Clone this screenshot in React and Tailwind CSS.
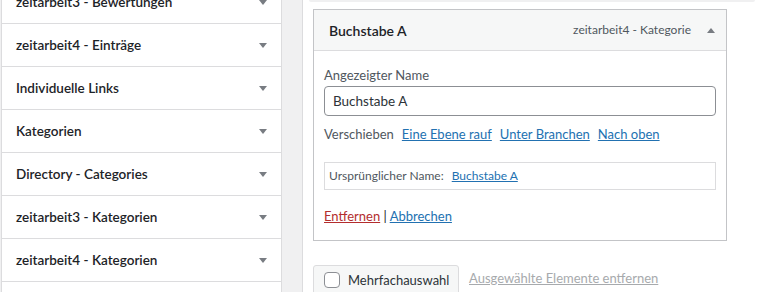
import { useState } from "react";

const menus = [
  "zeitarbeit3 - Bewertungen",
  "zeitarbeit4 - Einträge",
  "Individuelle Links",
  "Kategorien",
  "Directory - Categories",
  "zeitarbeit3 - Kategorien",
  "zeitarbeit4 - Kategorien",
  "Schlagwörter",
];

function Caret({ up }) {
  return (
    <svg width="8" height="5" viewBox="0 0 8 5" className="fill-[#787c82]">
      {up ? <path d="M4 0 L8 5 L0 5 Z" /> : <path d="M0 0 L8 0 L4 5 Z" />}
    </svg>
  );
}

export default function App() {
  const [name, setName] = useState("Buchstabe A");

  return (
    <div className="h-[292px] w-[771px] overflow-hidden bg-[#f0f0f1] font-['Lato',sans-serif] text-[#1d2327] flex">
      {/* left accordion */}
      <div className="ml-px w-[281px] shrink-0 overflow-hidden">
        <div className="-mt-[19px] bg-white border-x border-[#dcdcde]">
          {menus.map((m) => (
            <div key={m} className="h-[43px] flex items-center justify-between pl-[14px] pr-[14px] border-b border-[#dcdcde]">
              <span className="text-[13.5px] font-semibold">{m}</span>
              <Caret />
            </div>
          ))}
        </div>
      </div>

      {/* right column */}
      <div className="ml-[20px] flex-1 bg-white border-l border-[#dcdcde] pl-[10px] relative">
        <div className="absolute left-[6px] right-[16px] top-0 h-[2px] rounded-b-md bg-[#f0f0f1]" />
        <div className="mt-[9px] w-[414px] border border-[#c3c4c7]">
          <div className="h-[41px] bg-[#f6f7f7] border-b border-[#dcdcde] flex items-center pl-[15px] pr-[11px]">
            <span className="text-[14px] font-semibold flex-1">Buchstabe A</span>
            <span className="text-[12px] text-[#50575e] mr-[16px]">zeitarbeit4 - Kategorie</span>
            <Caret up />
          </div>
          <div className="px-[10px] pt-[14px] pb-[14px]">
            <label className="block text-[13px] text-[#50575e] leading-[20px]">Angezeigter Name</label>
            <input
              value={name}
              onChange={(e) => setName(e.target.value)}
              className="mt-px w-[392px] h-[30px] rounded-[4px] border border-[#8c8f94] px-[8px] text-[13.5px] text-[#2c3338] outline-none"
            />
            <div className="mt-[8px] text-[13px] text-[#50575e] flex gap-[8px] leading-[20px]">
              <span>Verschieben</span>
              <a className="text-[#2271b1] underline" href="#">Eine Ebene rauf</a>
              <a className="text-[#2271b1] underline" href="#">Unter Branchen</a>
              <a className="text-[#2271b1] underline" href="#">Nach oben</a>
            </div>
            <div className="mt-[18px] h-[28px] w-[392px] border border-[#dcdcde] flex items-center pl-[4px] text-[12px] text-[#50575e]">
              <span>Ursprünglicher Name:</span>
              <a className="ml-[8px] text-[#2271b1] underline" href="#">Buchstabe A</a>
            </div>
            <div className="mt-[16px] text-[13px] leading-[20px]">
              <a className="text-[#b32d2e] underline" href="#">Entfernen</a>
              <span className="text-[#1d2327]"> | </span>
              <a className="text-[#2271b1] underline" href="#">Abbrechen</a>
            </div>
          </div>
        </div>

        <div className="mt-[24px] flex items-center">
          <div className="h-[36px] w-[146px] rounded-[3px] border border-[#dcdcde] bg-[#f6f7f7] flex items-start pt-[6px] pl-[10px]">
            <span className="w-[16px] h-[16px] rounded-[4px] border border-[#8c8f94] bg-white" />
            <span className="ml-[8px] text-[13px] leading-[16px] text-[#2c3338]">Mehrfachauswahl</span>
          </div>
          <a className="ml-[10px] -mt-[9px] text-[13px] text-[#a7aaad] underline" href="#">Ausgewählte Elemente entfernen</a>
        </div>
      </div>
    </div>
  );
}
